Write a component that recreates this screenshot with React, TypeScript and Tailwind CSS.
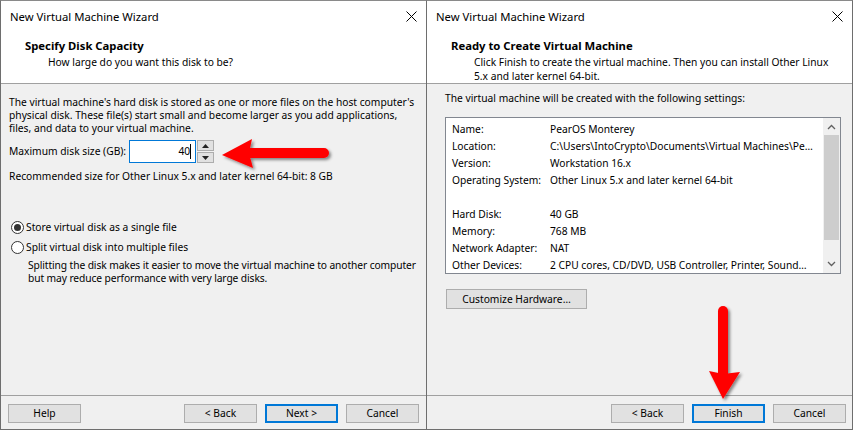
import React from 'react';

const CloseIcon = () => (
  <svg width="11" height="11" viewBox="0 0 11 11" className="shrink-0">
    <path d="M0.5 0.5 L10.5 10.5 M10.5 0.5 L0.5 10.5" stroke="#000" strokeWidth="1" />
  </svg>
);

const Button = ({ label, primary, className = '' }: { label: string; primary?: boolean; className?: string }) => (
  <div
    className={`h-[19px] w-[73px] flex items-center justify-center bg-[#e1e1e1] ${
      primary ? 'border-2 border-[#0078d7]' : 'border border-[#adadad]'
    } ${className}`}
  >
    {label}
  </div>
);

interface WindowProps {
  title: string;
  heading: string;
  subtitle: React.ReactNode;
  children: React.ReactNode;
  footer: React.ReactNode;
  className?: string;
}

const Wizard: React.FC<WindowProps> = ({ title, heading, subtitle, children, footer, className = '' }) => (
  <div className={`h-[430px] flex flex-col border-t border-[#8a8a8a] border-b border-b-[#6e6e6e] ${className}`}>
    {/* title bar */}
    <div className="h-[30px] bg-white flex items-center justify-between pl-[9px] pr-[9px] shrink-0">
      <span className="text-[11.3px]">{title}</span>
      <CloseIcon />
    </div>
    {/* header */}
    <div className="h-[53px] bg-white border-b border-[#a0a0a0] pt-[8px] shrink-0">
      <div className="pl-[24px] font-bold text-[11.3px] leading-[14px] mb-[2px]">{heading}</div>
      <div className="pl-[47px] leading-[14px]">{subtitle}</div>
    </div>
    <div className="flex-1 bg-[#f0f0f0] flex flex-col min-h-0">
      <div className="flex-1 min-h-0">{children}</div>
      <div className="h-[34px] border-t border-[#a0a0a0] flex items-start pt-[8px] shrink-0">{footer}</div>
    </div>
  </div>
);

const Radio = ({ checked, label }: { checked?: boolean; label: string }) => (
  <div className="h-[20px] flex items-center">
    <div className="ml-[2px] w-[13px] h-[13px] rounded-full border border-[#333] bg-white flex items-center justify-center">
      {checked && <div className="w-[7px] h-[7px] rounded-full bg-[#333]" />}
    </div>
    <span className="ml-[2px]">{label}</span>
  </div>
);

const SpinHalf = ({ up }: { up?: boolean }) => (
  <div className="h-[11px] w-[17px] border border-[#adadad] bg-[#e1e1e1] flex items-center justify-center">
    <svg width="7" height="4" viewBox="0 0 7 4">
      <path d={up ? 'M0 4 L3.5 0 L7 4 Z' : 'M0 0 L3.5 4 L7 0 Z'} fill="#222" />
    </svg>
  </div>
);

const settings: [string, string][] = [
  ['Name:', 'PearOS Monterey'],
  ['Location:', 'C:\\Users\\IntoCrypto\\Documents\\Virtual Machines\\Pe…'],
  ['Version:', 'Workstation 16.x'],
  ['Operating System:', 'Other Linux 5.x and later kernel 64-bit'],
  ['', ''],
  ['Hard Disk:', '40 GB'],
  ['Memory:', '768 MB'],
  ['Network Adapter:', 'NAT'],
  ['Other Devices:', '2 CPU cores, CD/DVD, USB Controller, Printer, Sound…'],
];

export default function App() {
  return (
    <div className="relative w-[854px] h-[431px] bg-white flex overflow-hidden text-[10.25px] text-black font-['Noto_Sans',sans-serif] leading-[13px]">
      {/* left wizard */}
      <Wizard
        className="w-[427px] border-l border-l-[#6e6e6e] border-r border-r-[#6e6e6e]"
        title="New Virtual Machine Wizard"
        heading="Specify Disk Capacity"
        subtitle="How large do you want this disk to be?"
        footer={
          <div className="flex w-full px-[7px]">
            <Button label="Help" />
            <div className="flex-1" />
            <Button label="< Back" />
            <Button label="Next >" primary className="ml-[8px]" />
            <Button label="Cancel" className="ml-[8px]" />
          </div>
        }
      >
        <div className="pt-[12px] pl-[8px] pr-[6px]">
          <p>
            The virtual machine's hard disk is stored as one or more files on the host computer's physical disk. These
            file(s) start small and become larger as you add applications, files, and data to your virtual machine.
          </p>
          <div className="flex items-center mt-[5px]">
            <span>Maximum disk size (GB):</span>
            <div className="ml-[3px] w-[67px] h-[23px] bg-white border border-[#0078d7] flex items-center justify-end pr-[4px]">
              <span>40</span>
              <span className="w-px h-[15px] bg-black" />
            </div>
            <div className="ml-px flex flex-col gap-px">
              <SpinHalf up />
              <SpinHalf />
            </div>
          </div>
          <div className="mt-[7px]">Recommended size for Other Linux 5.x and later kernel 64-bit: 8 GB</div>
          <div className="mt-[34px]">
            <Radio checked label="Store virtual disk as a single file" />
            <Radio label="Split virtual disk into multiple files" />
          </div>
          <p className="mt-[2px] pl-[19px] whitespace-nowrap tracking-[-0.1px]">
            Splitting the disk makes it easier to move the virtual machine to another computer
            <br />
            but may reduce performance with very large disks.
          </p>
        </div>
      </Wizard>

      {/* right wizard */}
      <Wizard
        className="w-[426px] border-r border-r-[#6e6e6e]"
        title="New Virtual Machine Wizard"
        heading="Ready to Create Virtual Machine"
        subtitle={
          <>
            Click Finish to create the virtual machine. Then you can install Other Linux
            <br />
            5.x and later kernel 64-bit.
          </>
        }
        footer={
          <div className="flex w-full justify-end pr-[6px] gap-[8px]">
            <Button label="< Back" />
            <Button label="Finish" primary />
            <Button label="Cancel" />
          </div>
        }
      >
        <div className="pt-[8px] pl-[18px] pr-[11px]">
          <div>The virtual machine will be created with the following settings:</div>
          <div className="mt-[12px] h-[157px] border border-[#828790] bg-white flex overflow-hidden">
            <div className="flex-1 pt-[3px] pl-[6px] overflow-hidden">
              {settings.map(([k, v], i) => (
                <div key={i} className="h-[17px] flex items-center whitespace-nowrap">
                  <span className="w-[98px] shrink-0">{k}</span>
                  <span>{v}</span>
                </div>
              ))}
            </div>
            <div className="w-[17px] bg-[#f0f0f0] flex flex-col items-center shrink-0">
              <svg width="9" height="17" viewBox="0 0 9 17" className="shrink-0">
                <path d="M1 11 L4.5 7.5 L8 11" stroke="#606060" strokeWidth="1.3" fill="none" />
              </svg>
              <div className="w-[15px] h-[105px] bg-[#cdcdcd]" />
              <div className="flex-1" />
              <svg width="9" height="17" viewBox="0 0 9 17" className="shrink-0">
                <path d="M1 6 L4.5 9.5 L8 6" stroke="#606060" strokeWidth="1.3" fill="none" />
              </svg>
            </div>
          </div>
          <div className="mt-[15px] ml-px w-[141px] h-[20px] border border-[#adadad] bg-[#e1e1e1] flex items-center justify-center">
            Customize Hardware…
          </div>
        </div>
      </Wizard>

      {/* red annotation arrows */}
      <svg className="absolute inset-0 pointer-events-none" width="854" height="431" viewBox="0 0 854 431">
        <defs>
          <filter id="sh" x="-20%" y="-20%" width="140%" height="140%">
            <feDropShadow dx="2" dy="2" stdDeviation="1.6" floodColor="#000" floodOpacity="0.45" />
          </filter>
        </defs>
        <g filter="url(#sh)" fill="#ff0000">
          <line x1="250" y1="153" x2="324" y2="153" stroke="#ff0000" strokeWidth="10" strokeLinecap="round" />
          <path d="M222 155 L252 139 L249 153 L253 168 Z" />
          <line x1="723" y1="311" x2="723" y2="375" stroke="#ff0000" strokeWidth="10" strokeLinecap="round" />
          <path d="M723 399 L709 371 L723 374 L740 372 Z" />
        </g>
      </svg>
    </div>
  );
}
